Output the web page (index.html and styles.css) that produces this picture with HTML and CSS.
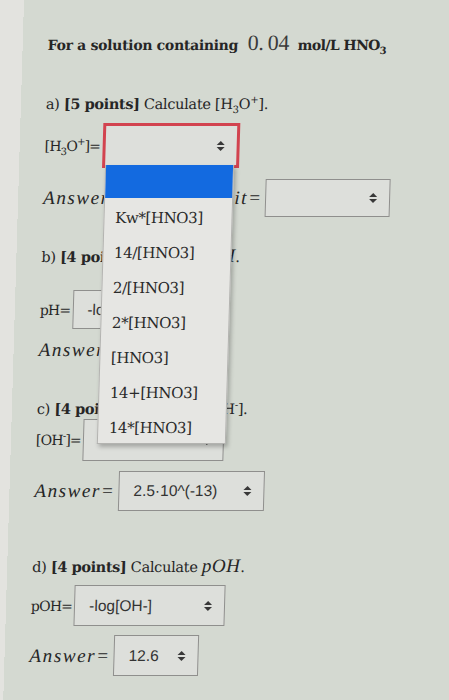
FILE: index.html
```html
<!DOCTYPE html>
<html lang="en">
<head>
  <meta charset="UTF-8">
  <meta name="viewport" content="width=device-width, initial-scale=1.0">
  <title>HNO3 Question</title>
  <link rel="stylesheet" href="styles.css">
</head>
<body>
  <div class="panel">
    <p class="title">For a solution containing <span class="num">0.&#8201;04</span> <span class="tight">mol/L HNO<sub>3</sub></span></p>

    <!-- part a -->
    <p class="q qa">a) <b>[5 points]</b> Calculate [H<sub>3</sub>O<sup>+</sup>].</p>
    <div class="row row-h3o">
      <span class="lbl">[H<sub>3</sub>O<sup>+</sup>]=</span>
      <div class="sel sel-open w-h3o">
        <span class="val"></span>
        <span class="arrows"></span>
        <ul class="dropdown">
          <li class="picked"></li>
          <li>Kw*[HNO3]</li>
          <li>14/[HNO3]</li>
          <li>2/[HNO3]</li>
          <li>2*[HNO3]</li>
          <li>[HNO3]</li>
          <li>14+[HNO3]</li>
          <li>14*[HNO3]</li>
        </ul>
      </div>
    </div>
    <div class="row row-unit">
      <span class="ans">Answer=</span>
      <div class="box w-input"></div>
      <span class="ans unit">unit=</span>
      <div class="sel w-unit">
        <span class="val"></span>
        <span class="arrows"></span>
      </div>
    </div>

    <!-- part b -->
    <p class="q qb">b) <b>[4 points]</b> Calculate <i class="m">pH</i>.</p>
    <div class="row row-ph">
      <span class="lbl">pH=</span>
      <div class="sel w-ph">
        <span class="val">-log[H+]</span>
        <span class="arrows"></span>
      </div>
    </div>
    <div class="row row-ansb">
      <span class="ans">Answer=</span>
      <div class="sel w-small">
        <span class="val">1.4</span>
        <span class="arrows"></span>
      </div>
    </div>

    <!-- part c -->
    <p class="q qc">c) <b>[4 points]</b> Calculate [OH<sup>-</sup>].</p>
    <div class="row row-oh">
      <span class="lbl">[OH<sup>-</sup>]=</span>
      <div class="sel w-oh">
        <span class="val"></span>
        <span class="arrows"></span>
      </div>
    </div>
    <div class="row row-ansc">
      <span class="ans">Answer=</span>
      <div class="sel w-ansc">
        <span class="val">2.5·10^(-13)</span>
        <span class="arrows"></span>
      </div>
    </div>

    <!-- part d -->
    <p class="q qd">d) <b>[4 points]</b> Calculate <i class="m">pOH</i>.</p>
    <div class="row row-poh">
      <span class="lbl">pOH=</span>
      <div class="sel w-poh">
        <span class="val">-log[OH-]</span>
        <span class="arrows"></span>
      </div>
    </div>
    <div class="row row-ansd">
      <span class="ans">Answer=</span>
      <div class="sel w-small">
        <span class="val">12.6</span>
        <span class="arrows"></span>
      </div>
    </div>
  </div>
</body>
</html>
```

FILE: styles.css
```css
html, body {
  margin: 0;
  padding: 0;
  height: 100%;
  overflow: hidden;
}
body {
  /* light strip of the monitor edge on the left, slanted like the photo */
  background: linear-gradient(91.7deg, #e3e3df 24px, #d4d9d1 24px);
  font-family: "DejaVu Serif", "Liberation Serif", serif;
  color: #262626;
}

/* the photographed screen is a little tilted */
.panel {
  padding: 33px 0 0 49px;
  transform: skewX(-1.7deg);
  transform-origin: 0 0;
}

p {
  margin: 0;
}

.title {
  font-size: 14px;
  font-weight: bold;
  line-height: 24px;
  letter-spacing: -0.3px;
}
.title sub {
  font-size: 10px;
  line-height: 0;
}
.tight {
  letter-spacing: -0.6px;
}
.num {
  font-family: "Liberation Serif", serif;
  font-weight: normal;
  font-size: 22px;
  line-height: 0;
  color: #3a3a3a;
  margin: 0 4px 0 5px;
}

.q {
  font-size: 14.5px;
  line-height: 24px;
  letter-spacing: -0.3px;
}
.q b {
  letter-spacing: -0.4px;
}
.q sub, .lbl sub, .q sup, .lbl sup {
  font-size: 10px;
  line-height: 0;
}
.m {
  font-family: "Liberation Serif", serif;
  font-size: 19px;
  line-height: 0;
  letter-spacing: 0.5px;
}

.qa { margin-top: 35px; }
.qb { margin-top: 28px; }
.qc { margin-top: 31px; line-height: 20px; }
.qd { margin-top: 44px; }

.row {
  display: flex;
  align-items: center;
}
.row-h3o { margin-top: 7px; height: 45px; }
.row-unit { margin-top: 11px; height: 38px; }
.row-ph { margin-top: 21px; height: 39px; }
.row-ansb { margin-top: 3px; height: 36px; }
.row-oh { margin-top: 0; height: 42px; }
.row-ansc { margin-top: 10px; height: 40px; }
.row-poh { margin-top: 6px; height: 41px; }
.row-ansd { margin-top: 9px; height: 41px; }

.lbl {
  font-size: 14px;
  letter-spacing: -0.8px;
  margin-right: 2px;
}
.ans {
  font-family: "Liberation Serif", serif;
  font-style: italic;
  font-size: 19px;
  letter-spacing: 1.6px;
  margin-right: 3px;
}
.unit {
  margin-left: 10px;
}

.box, .sel {
  box-sizing: border-box;
  height: 100%;
  border: 1.5px solid #8f8f8d;
  background: #dddfdb;
}
.sel {
  position: relative;
  display: flex;
  align-items: center;
  padding: 0 12px 0 14px;
  font-family: "Liberation Sans", Arial, sans-serif;
  font-size: 15.5px;
  color: #333;
}
.val {
  flex: 1;
}
.arrows {
  width: 0;
  height: 0;
  position: relative;
  margin-right: 4px;
}
.arrows::before, .arrows::after {
  content: "";
  position: absolute;
  left: -4px;
  border-left: 4px solid transparent;
  border-right: 4px solid transparent;
}
.arrows::before {
  top: -5px;
  border-bottom: 4px solid #383838;
}
.arrows::after {
  top: 1px;
  border-top: 4px solid #383838;
}

.sel-open {
  border: 3px solid #d2434f;
  z-index: 2;
}

.w-h3o { width: 137px; }
.w-input { width: 75px; }
.w-unit { width: 125px; }
.w-ph { width: 130px; }
.w-small { width: 85px; }
.w-oh { width: 141px; }
.w-ansc { width: 146px; padding-left: 14px; }
.w-poh { width: 151px; }

/* open select list */
.dropdown {
  position: absolute;
  top: 100%;
  left: 0;
  width: 127px;
  margin: 0;
  padding: 0;
  list-style: none;
  background: #e6e6e3;
  border: 1px solid #b3b3b0;
  border-top: none;
  box-shadow: 2px 3px 4px rgba(0, 0, 0, 0.25);
  font-family: "DejaVu Serif", serif;
  font-size: 15px;
  letter-spacing: -0.4px;
  color: #2a2a2a;
}
.dropdown li {
  box-sizing: border-box;
  height: 35px;
  line-height: 35px;
  padding: 3px 0 0 11px;
}
.dropdown .picked {
  height: 33px;
  background: #136ae0;
}
```
